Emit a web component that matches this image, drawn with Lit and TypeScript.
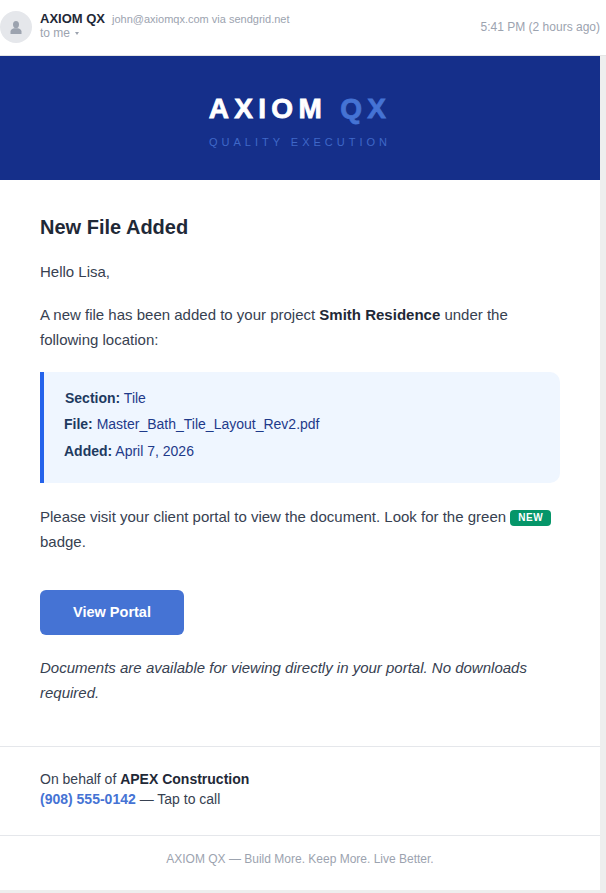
import { LitElement, html, css } from "lit";
import { customElement } from "lit/decorators.js";

@customElement("app-root")
export class AppRoot extends LitElement {
  static styles = css`
    :host { display: block; background: #eeeeee; font-family: "Liberation Sans", Arial, sans-serif; height: 893px; overflow: hidden; }
    .page { width: 600px; background: #fff; height: 890px; }
    .mail { box-sizing: border-box; display: flex; align-items: flex-start; border-bottom: 1px solid #e5e5e5; height: 56px; width: 606px; background: #fff; }
    .avatar { width: 32px; height: 32px; border-radius: 50%; background: #e5e7eb; margin-top: 11px; display: flex; align-items: center; justify-content: center; flex: none; }
    .who { margin-left: 8px; padding-top: 12px; flex: 1; }
    .line1 { display: flex; align-items: baseline; line-height: 14px; }
    .name { font-size: 13px; font-weight: 700; color: #1f2937; }
    .addr { font-size: 11px; color: #9ca3af; margin-left: 7px; }
    .line2 { font-size: 12px; line-height: 14px; color: #9ca3af; display: flex; align-items: center; }
    .caret { width: 0; height: 0; border-left: 2px solid transparent; border-right: 2px solid transparent; border-top: 3px solid #9ca3af; margin-left: 5px; }
    .time { font-size: 12px; color: #9ca3af; padding-top: 20px; line-height: 14px; margin-right: 6px; }
    .hero { height: 124px; background: #152f8a; text-align: center; box-sizing: border-box; padding-top: 36px; }
    .logo { font-size: 28px; font-weight: 700; letter-spacing: 5.3px; line-height: 34px; color: #fff; -webkit-text-stroke: 0.8px currentColor; }
    .logo span { color: #4573d4; }
    .tag { font-size: 11px; letter-spacing: 4px; line-height: 13px; color: #3f68c8; margin-top: 10px; }
    .content { padding: 32px 40px 0; font-size: 15px; line-height: 25.5px; color: #374151; }
    h1 { margin: 0 0 17px; font-size: 20px; line-height: 30px; font-weight: 700; color: #1f2937; }
    p { margin: 0; }
    .p { margin-bottom: 17px; }
    strong { color: #1f2937; }
    .info { margin: 19px 0 20.6px; background: #eff6ff; border-left: 4px solid #2563eb; border-radius: 0 10px 10px 0; padding: 13px 20px 19px; font-size: 14px; line-height: 26.5px; color: #1e3a8a; }
    .info strong { color: #1e3a5f; }
    .info .first { padding-left: 1px; }
    .badge { display: inline-block; background: #059669; color: #fff; font-size: 10px; font-weight: 700; letter-spacing: .5px; line-height: 14px; padding: 1px 8px; border-radius: 4px; margin-left: 0; vertical-align: 1px; }
    .btn { display: block; width: 144px; height: 45px; margin: 35.4px 0 19.6px; background: #4573d4; color: #fff; font-size: 14.5px; font-weight: 700; line-height: 45px; text-align: center; border-radius: 6px; text-decoration: none; }
    .note { font-style: italic; color: #374151; }
    .behalf { margin-top: 40.4px; border-top: 1px solid #e5e7eb; padding: 22px 40px 0; height: 89px; box-sizing: border-box; font-size: 14px; line-height: 20px; color: #374151; }
    .behalf a { color: #4573d4; font-weight: 700; text-decoration: none; }
    .foot { border-top: 1px solid #e5e7eb; text-align: center; font-size: 12px; color: #9ca3af; line-height: 14px; padding-top: 16px; }
  `;

  render() {
    return html`
      <div class="page">
        <div class="mail">
          <div class="avatar">
            <svg width="12" height="13" viewBox="0 0 12 13" fill="#9ca3af"><ellipse cx="6" cy="3.6" rx="3" ry="3.6"></ellipse><path d="M0.500 13V10.500C0.500 8.800 2 7.800 4 7.200H8C10 7.800 11.500 8.800 11.500 10.500V13Z"></path></svg>
          </div>
          <div class="who">
            <div class="line1"><span class="name">AXIOM QX</span><span class="addr">john@axiomqx.com via sendgrid.net</span></div>
            <div class="line2">to me<span class="caret"></span></div>
          </div>
          <div class="time">5:41 PM (2 hours ago)</div>
        </div>
        <div class="hero">
          <div class="logo">AXIOM <span>QX</span></div>
          <div class="tag">QUALITY EXECUTION</div>
        </div>
        <div class="content">
          <h1>New File Added</h1>
          <p class="p">Hello Lisa,</p>
          <p>A new file has been added to your project <strong>Smith Residence</strong> under the following location:</p>
          <div class="info">
            <div class="first"><strong>Section:</strong> Tile</div>
            <div><strong>File:</strong> Master_Bath_Tile_Layout_Rev2.pdf</div>
            <div><strong>Added:</strong> April 7, 2026</div>
          </div>
          <p>Please visit your client portal to view the document. Look for the green <span class="badge">NEW</span> badge.</p>
          <a class="btn" href="#">View Portal</a>
          <p class="note">Documents are available for viewing directly in your portal. No downloads required.</p>
        </div>
        <div class="behalf">
          On behalf of <strong>APEX Construction</strong><br />
          <a href="#">(908) 555-0142</a> — Tap to call
        </div>
        <div class="foot">AXIOM QX — Build More. Keep More. Live Better.</div>
      </div>
    `;
  }
}
